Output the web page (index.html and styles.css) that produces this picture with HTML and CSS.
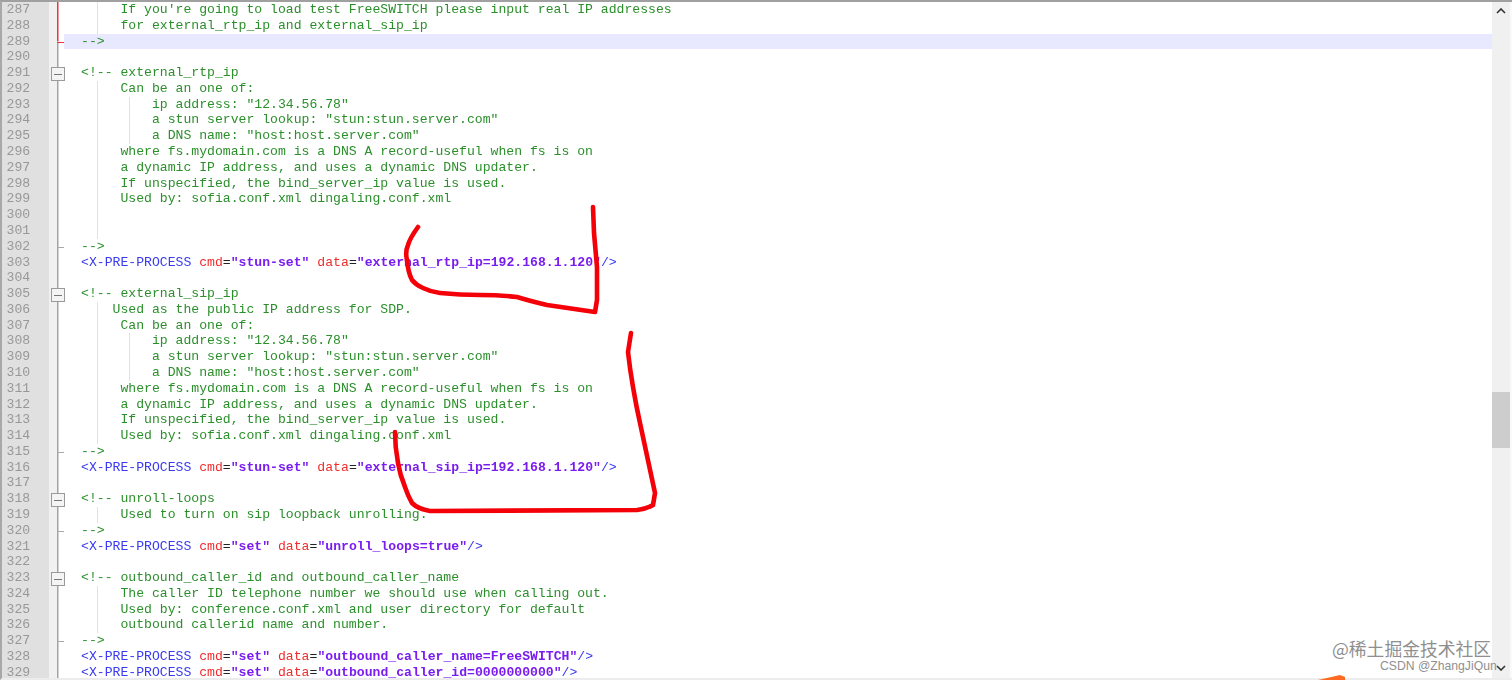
FILE: index.html
```html
<!DOCTYPE html>
<html lang="en">
<head>
<meta charset="utf-8">
<title>freeswitch vars.xml</title>
<link rel="stylesheet" href="styles.css">
</head>
<body>
<main class="window">
<section class="editor">
<div class="row red g1"><span class="num">287</span><span class="fold"></span><span class="code">     If you're going to load test FreeSWITCH please input real IP addresses</span></div>
<div class="row red g1"><span class="num">288</span><span class="fold"></span><span class="code">     for external_rtp_ip and external_sip_ip</span></div>
<div class="row current"><span class="num">289</span><span class="fold tick redtick"></span><span class="code">--&gt;</span></div>
<div class="row"><span class="num">290</span><span class="fold"></span><span class="code"></span></div>
<div class="row"><span class="num">291</span><span class="fold box"></span><span class="code">&lt;!-- external_rtp_ip</span></div>
<div class="row g1"><span class="num">292</span><span class="fold"></span><span class="code">     Can be an one of:</span></div>
<div class="row g2"><span class="num">293</span><span class="fold"></span><span class="code">         ip address: "12.34.56.78"</span></div>
<div class="row g2"><span class="num">294</span><span class="fold"></span><span class="code">         a stun server lookup: "stun:stun.server.com"</span></div>
<div class="row g2"><span class="num">295</span><span class="fold"></span><span class="code">         a DNS name: "host:host.server.com"</span></div>
<div class="row g1"><span class="num">296</span><span class="fold"></span><span class="code">     where fs.mydomain.com is a DNS A record-useful when fs is on</span></div>
<div class="row g1"><span class="num">297</span><span class="fold"></span><span class="code">     a dynamic IP address, and uses a dynamic DNS updater.</span></div>
<div class="row g1"><span class="num">298</span><span class="fold"></span><span class="code">     If unspecified, the bind_server_ip value is used.</span></div>
<div class="row g1"><span class="num">299</span><span class="fold"></span><span class="code">     Used by: sofia.conf.xml dingaling.conf.xml</span></div>
<div class="row g1"><span class="num">300</span><span class="fold"></span><span class="code"></span></div>
<div class="row g1"><span class="num">301</span><span class="fold"></span><span class="code"></span></div>
<div class="row"><span class="num">302</span><span class="fold tick"></span><span class="code">--&gt;</span></div>
<div class="row"><span class="num">303</span><span class="fold"></span><span class="code"><span class="tag">&lt;X-PRE-PROCESS</span> <span class="attr">cmd</span><span class="eq">=</span><span class="val">"stun-set"</span> <span class="attr">data</span><span class="eq">=</span><span class="val">"external_rtp_ip=192.168.1.120"</span><span class="tag">/&gt;</span></span></div>
<div class="row"><span class="num">304</span><span class="fold"></span><span class="code"></span></div>
<div class="row"><span class="num">305</span><span class="fold box"></span><span class="code">&lt;!-- external_sip_ip</span></div>
<div class="row g1"><span class="num">306</span><span class="fold"></span><span class="code">    Used as the public IP address for SDP.</span></div>
<div class="row g1"><span class="num">307</span><span class="fold"></span><span class="code">     Can be an one of:</span></div>
<div class="row g2"><span class="num">308</span><span class="fold"></span><span class="code">         ip address: "12.34.56.78"</span></div>
<div class="row g2"><span class="num">309</span><span class="fold"></span><span class="code">         a stun server lookup: "stun:stun.server.com"</span></div>
<div class="row g2"><span class="num">310</span><span class="fold"></span><span class="code">         a DNS name: "host:host.server.com"</span></div>
<div class="row g1"><span class="num">311</span><span class="fold"></span><span class="code">     where fs.mydomain.com is a DNS A record-useful when fs is on</span></div>
<div class="row g1"><span class="num">312</span><span class="fold"></span><span class="code">     a dynamic IP address, and uses a dynamic DNS updater.</span></div>
<div class="row g1"><span class="num">313</span><span class="fold"></span><span class="code">     If unspecified, the bind_server_ip value is used.</span></div>
<div class="row g1"><span class="num">314</span><span class="fold"></span><span class="code">     Used by: sofia.conf.xml dingaling.conf.xml</span></div>
<div class="row"><span class="num">315</span><span class="fold tick"></span><span class="code">--&gt;</span></div>
<div class="row"><span class="num">316</span><span class="fold"></span><span class="code"><span class="tag">&lt;X-PRE-PROCESS</span> <span class="attr">cmd</span><span class="eq">=</span><span class="val">"stun-set"</span> <span class="attr">data</span><span class="eq">=</span><span class="val">"external_sip_ip=192.168.1.120"</span><span class="tag">/&gt;</span></span></div>
<div class="row"><span class="num">317</span><span class="fold"></span><span class="code"></span></div>
<div class="row"><span class="num">318</span><span class="fold box"></span><span class="code">&lt;!-- unroll-loops</span></div>
<div class="row g1"><span class="num">319</span><span class="fold"></span><span class="code">     Used to turn on sip loopback unrolling.</span></div>
<div class="row"><span class="num">320</span><span class="fold tick"></span><span class="code">--&gt;</span></div>
<div class="row"><span class="num">321</span><span class="fold"></span><span class="code"><span class="tag">&lt;X-PRE-PROCESS</span> <span class="attr">cmd</span><span class="eq">=</span><span class="val">"set"</span> <span class="attr">data</span><span class="eq">=</span><span class="val">"unroll_loops=true"</span><span class="tag">/&gt;</span></span></div>
<div class="row"><span class="num">322</span><span class="fold"></span><span class="code"></span></div>
<div class="row"><span class="num">323</span><span class="fold box"></span><span class="code">&lt;!-- outbound_caller_id and outbound_caller_name</span></div>
<div class="row g1"><span class="num">324</span><span class="fold"></span><span class="code">     The caller ID telephone number we should use when calling out.</span></div>
<div class="row g1"><span class="num">325</span><span class="fold"></span><span class="code">     Used by: conference.conf.xml and user directory for default</span></div>
<div class="row g1"><span class="num">326</span><span class="fold"></span><span class="code">     outbound callerid name and number.</span></div>
<div class="row"><span class="num">327</span><span class="fold tick"></span><span class="code">--&gt;</span></div>
<div class="row"><span class="num">328</span><span class="fold"></span><span class="code"><span class="tag">&lt;X-PRE-PROCESS</span> <span class="attr">cmd</span><span class="eq">=</span><span class="val">"set"</span> <span class="attr">data</span><span class="eq">=</span><span class="val">"outbound_caller_name=FreeSWITCH"</span><span class="tag">/&gt;</span></span></div>
<div class="row"><span class="num">329</span><span class="fold"></span><span class="code"><span class="tag">&lt;X-PRE-PROCESS</span> <span class="attr">cmd</span><span class="eq">=</span><span class="val">"set"</span> <span class="attr">data</span><span class="eq">=</span><span class="val">"outbound_caller_id=0000000000"</span><span class="tag">/&gt;</span></span></div>
</section>
<aside class="scrollbar">
<svg class="arrow" viewBox="0 0 10 6" width="10" height="6"><path d="M1 5 L5 1 L9 5" fill="none" stroke="#333" stroke-width="1.6"/></svg>
<div class="track"><div class="thumb"></div></div>
<svg class="arrow arrow-down" viewBox="0 0 10 6" width="10" height="6"><path d="M1 1 L5 5 L9 1" fill="none" stroke="#333" stroke-width="1.6"/></svg>
</aside>
</main>
<svg class="ink" viewBox="0 0 1512 680" width="1512" height="680">
<path class="stroke" d="M418 227 Q410 238 408 245 Q405 252 407 260 Q408 272 412 280 Q416 285 423 288 Q431 292 440 293 Q460 295 480 295 Q500 295 517 297 Q530 301 547 305 L595 312 L597 300 L597 267 L594 233 L593 207"/>
<path class="stroke" d="M631 333 L628 352 Q630 370 633 387 Q636 405 640 423 L655 493 L653 505 Q646 509 637 510 L430 511 Q418 509 412 503 Q408 496 405 487 Q400 475 398 463 Q395 447 395 432"/>
<polygon class="flare" points="1318,680 1340,675 1345,677 1345,680"/>
</svg>
<div class="mark">
<span class="mark-big">@稀土掘金技术社区</span>
<span class="mark-small">CSDN @ZhangJiQun</span>
</div>
</body>
</html>
```
FILE: styles.css
```css
* { box-sizing: border-box; }
html, body { margin: 0; height: 680px; overflow: hidden; background: #fff; }

.window {
  display: flex;
  height: 680px;
  overflow: hidden;
  border-top: 2px solid #a0a0a0;
  border-left: 2px solid #a8a8a8;
  border-bottom: 2px solid #ececec;
  background: #fff;
  filter: blur(0.35px);
}

.editor { flex: 1; min-width: 0; overflow: hidden; }

.row {
  display: flex;
  height: 15.786px;
  line-height: 15.786px;
  font-family: "Liberation Mono", monospace;
  font-size: 13.14px;
  color: #2b8f2b;
  white-space: pre;
}

.num {
  flex: 0 0 47px;
  padding-left: 4.5px;
  background: #e0e0e0;
  color: #989898;
}

.fold {
  flex: 0 0 15px;
  background:
    linear-gradient(#a4a4a4, #a4a4a4) 8px 0 / 1.5px 100% no-repeat,
    linear-gradient(#f1f1f1, #f1f1f1) 0 0 / 8px 100% no-repeat,
    #fff;
  position: relative;
}
.red .fold {
  background:
    linear-gradient(#f0303c, #f0303c) 8px 0 / 1.5px 100% no-repeat,
    linear-gradient(#f1f1f1, #f1f1f1) 0 0 / 8px 100% no-repeat,
    #fff;
}
.tick::after {
  content: "";
  position: absolute;
  left: 8px;
  top: 8px;
  width: 7px;
  height: 1px;
  background: #a8a8a8;
}
.redtick {
  background:
    linear-gradient(#f0303c, #f0303c) 8px 0 / 1.5px 50% no-repeat,
    linear-gradient(#a4a4a4, #a4a4a4) 8px 100% / 1.5px 50% no-repeat,
    linear-gradient(#f1f1f1, #f1f1f1) 0 0 / 8px 100% no-repeat,
    #fff;
}
.redtick::after { background: #f0303c; }
.box::after {
  content: "";
  position: absolute;
  left: 2px;
  top: 2px;
  width: 12px;
  height: 12px;
  border: 1px solid #9a9a9a;
  background: linear-gradient(#777, #777) center / 8px 1px no-repeat, #f4f4f4;
}

.code { flex: 1; padding-left: 17px; min-width: 0; }
.current .code { background: #e8e8ff; }
.g1 .code { background: linear-gradient(#e2e2e2, #e2e2e2) 33px 0 / 1px 100% no-repeat; }
.g2 .code {
  background:
    linear-gradient(#e2e2e2, #e2e2e2) 33px 0 / 1px 100% no-repeat,
    linear-gradient(#e2e2e2, #e2e2e2) 65px 0 / 1px 100% no-repeat;
}

.tag { color: #3a3af0; }
.attr { color: #f02c2c; }
.eq { color: #222; }
.val { color: #7a1cf0; font-weight: 700; }

.scrollbar {
  flex: 0 0 20px;
  display: flex;
  flex-direction: column;
  align-items: center;
  padding-right: 2px;
  background: linear-gradient(to right, #f0f0f0 18px, #fafafa 18px);
}
.arrow { flex: 0 0 auto; margin: 6px 0; }
.arrow-down { margin: 0 0 7px; }
.track { flex: 1; width: 18px; padding-top: 372px; }
.thumb { height: 56px; background: #cdcdcd; }

.ink { position: absolute; left: 0; top: 0; pointer-events: none; }
.stroke {
  fill: none;
  stroke: #f40008;
  stroke-width: 4.6;
  stroke-linecap: round;
  stroke-linejoin: round;
}
.flare { fill: #ff6a22; }

.mark {
  position: absolute;
  left: 1332px;
  top: 638px;
  width: 170px;
  display: flex;
  flex-direction: column;
  color: #8f8f8f;
}
.mark-big {
  font-family: "Noto Sans CJK SC", sans-serif;
  font-size: 17.8px;
  line-height: 21px;
  white-space: nowrap;
}
.mark-small {
  font-family: "Liberation Sans", sans-serif;
  font-size: 12.2px;
  line-height: 14px;
  margin-left: 48px;
  white-space: nowrap;
}
```
